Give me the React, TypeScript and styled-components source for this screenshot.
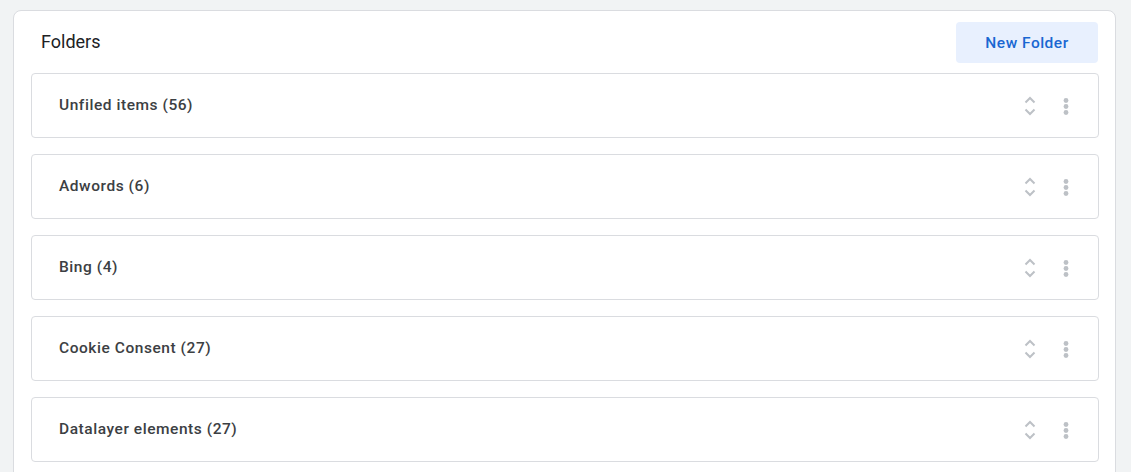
import React from "react";
import styled, { createGlobalStyle } from "styled-components";

const Global = createGlobalStyle`
  html, body { margin: 0; padding: 0; background: #f1f3f4; }
  body { font-family: Roboto, "Noto Sans", Arial, sans-serif; }
`;

const Page = styled.div`
  padding: 10px 15px 0 13px;
`;

const Card = styled.section`
  background: #ffffff;
  border: 1px solid #dadce0;
  border-radius: 8px;
  padding: 11px 16px 20px 17px;
  min-height: 480px;
`;

const Header = styled.div`
  display: flex;
  align-items: center;
  justify-content: space-between;
  height: 41px;
  margin-bottom: 10px;
`;

const Title = styled.h2`
  margin: 0 0 3px 10px;
  font-size: 18px;
  font-weight: 400;
  color: #202124;
`;

const NewButton = styled.button`
  width: 142px;
  height: 41px;
  margin-right: 1px;
  border: none;
  border-radius: 4px;
  background: #e8f0fe;
  color: #1967d2;
  font-family: inherit;
  font-size: 15.5px;
  font-weight: 500;
  letter-spacing: 0.5px;
  cursor: pointer;
`;

const List = styled.div`
  display: flex;
  flex-direction: column;
  gap: 16px;
`;

const Row = styled.div`
  display: flex;
  align-items: center;
  height: 63px;
  border: 1px solid #dadce0;
  border-radius: 4px;
  padding: 0 20px 0 27px;
`;

const Name = styled.span`
  flex: 1;
  margin-bottom: 2px;
  font-size: 15.5px;
  font-weight: 500;
  letter-spacing: 0.55px;
  color: #3c4043;
`;

const Actions = styled.div`
  display: flex;
  align-items: center;
  gap: 12px;
`;

const IconBox = styled.span`
  display: inline-flex;
  width: 24px;
  height: 24px;
  align-items: center;
  justify-content: center;
`;

const Reorder = () => (
  <IconBox>
    <svg width="24" height="24" viewBox="0 0 24 24" fill="none" stroke="#bdc1c6" strokeWidth="2">
      <polyline points="7.5,8.5 12,4 16.5,8.5" />
      <polyline points="7.5,15.5 12,20 16.5,15.5" />
    </svg>
  </IconBox>
);

const More = () => (
  <IconBox>
    <svg width="24" height="24" viewBox="0 0 24 24" fill="#bdc1c6">
      <circle cx="12" cy="6.5" r="2.4" />
      <circle cx="12" cy="12.5" r="2.4" />
      <circle cx="12" cy="18.5" r="2.4" />
    </svg>
  </IconBox>
);

const folders = [
  "Unfiled items (56)",
  "Adwords (6)",
  "Bing (4)",
  "Cookie Consent (27)",
  "Datalayer elements (27)",
];

export default function App() {
  return (
    <Page>
      <Global />
      <Card>
        <Header>
          <Title>Folders</Title>
          <NewButton>New Folder</NewButton>
        </Header>
        <List>
          {folders.map((f) => (
            <Row key={f}>
              <Name>{f}</Name>
              <Actions>
                <Reorder />
                <More />
              </Actions>
            </Row>
          ))}
        </List>
      </Card>
    </Page>
  );
}
